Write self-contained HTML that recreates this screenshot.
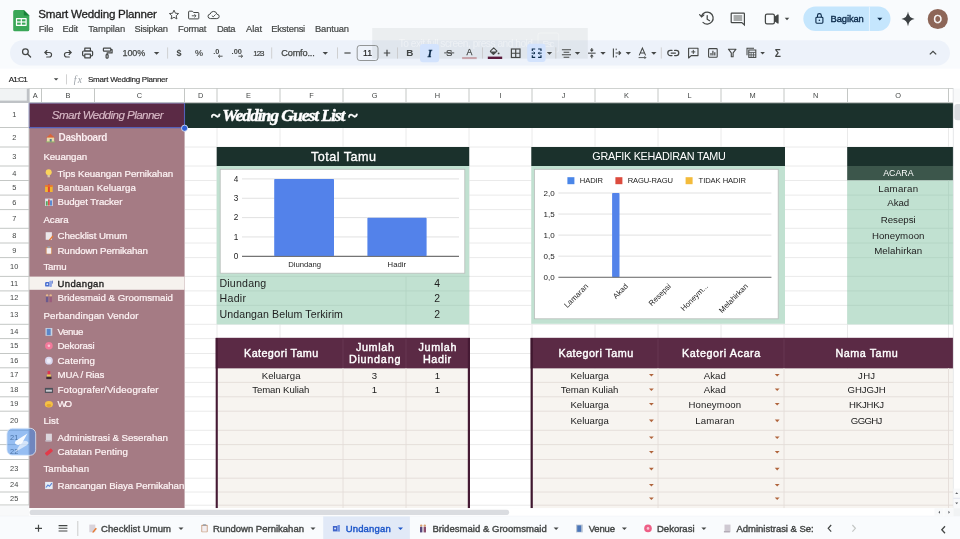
<!DOCTYPE html>
<html lang="id">
<head>
<meta charset="utf-8">
<title>Smart Wedding Planner</title>
<style>
html,body{margin:0;padding:0}
body{width:960px;height:539px;overflow:hidden;background:#f9fbfd;position:relative;font-family:"Liberation Sans",sans-serif}
.sec{position:absolute;left:0;width:960px;overflow:hidden;will-change:transform}
svg{display:block;font-family:"Liberation Sans",sans-serif}
#header{top:0;height:68px}
#formula{top:68px;height:20px}
#grid{top:88px;height:429px}
#tabs{top:516px;height:23px}
</style>
</head>
<body>
<div class="sec" id="header"><svg width="960" height="68" viewBox="0 0 960 68">
<g transform="translate(13.2,10.1)"><path d="M1.6 0 H10.6 L16.1 5.5 V19.6 Q16.1 21.2 14.5 21.2 H1.6 Q0 21.2 0 19.6 V1.6 Q0 0 1.6 0 Z" fill="#3aa757"/><path d="M10.6 0 L16.1 5.5 H11.6 Q10.6 5.5 10.6 4.5 Z" fill="#188038"/><rect x="2.7" y="8" width="10.8" height="7.8" rx="0.6" fill="#fff"/><rect x="3.9" y="9.2" width="3.6" height="2.1" fill="#3aa757"/><rect x="8.7" y="9.2" width="3.6" height="2.1" fill="#3aa757"/><rect x="3.9" y="12.5" width="3.6" height="2.1" fill="#3aa757"/><rect x="8.7" y="12.5" width="3.6" height="2.1" fill="#3aa757"/></g>
<text x="38.20" y="18.06" font-size="11.6" fill="#1f1f1f" textLength="118.60" lengthAdjust="spacing" stroke="#1f1f1f" stroke-width="0.3">Smart Wedding Planner</text>
<path d="M174 10.2 l1.4 3 3.2 .35 -2.4 2.2 .7 3.2 -2.9 -1.65 -2.9 1.65 .7 -3.2 -2.4 -2.2 3.2 -.35 z" fill="none" stroke="#444746" stroke-width="0.95" stroke-linejoin="round"/>
<g fill="none" stroke="#444746" stroke-width="1"><path d="M189.2 11.2 h3.2 l1.2 1.3 h4.6 q.6 0 .6 .6 v5.2 q0 .6 -.6 .6 h-9 q-.6 0 -.6 -.6 v-6.5 q0 -.6 .6 -.6z"/><path d="M191.8 15.8 h4.2 m-1.6 -1.6 l1.6 1.6 -1.6 1.6" stroke-width="0.9"/></g>
<g fill="none" stroke="#444746" stroke-width="1"><path d="M210.6 18.6 q-2.6 0 -2.6 -2.3 q0 -2 2.2 -2.3 q.8 -2.6 3.4 -2.6 q2.8 0 3.3 2.8 q2.3 .2 2.3 2.2 q0 2.2 -2.4 2.2 z"/><path d="M211.8 15.6 l1.4 1.3 2.4 -2.5" stroke-width="0.9"/></g>
<text x="38.80" y="31.89" font-size="9.4" fill="#444746" textLength="14.60" lengthAdjust="spacing" stroke="#444746" stroke-width="0.2">File</text>
<text x="62.50" y="31.89" font-size="9.4" fill="#444746" textLength="15.70" lengthAdjust="spacing" stroke="#444746" stroke-width="0.2">Edit</text>
<text x="88.20" y="31.89" font-size="9.4" fill="#444746" textLength="37.00" lengthAdjust="spacing" stroke="#444746" stroke-width="0.2">Tampilan</text>
<text x="134.50" y="31.89" font-size="9.4" fill="#444746" textLength="33.50" lengthAdjust="spacing" stroke="#444746" stroke-width="0.2">Sisipkan</text>
<text x="178.00" y="31.89" font-size="9.4" fill="#444746" textLength="28.40" lengthAdjust="spacing" stroke="#444746" stroke-width="0.2">Format</text>
<text x="216.90" y="31.89" font-size="9.4" fill="#444746" textLength="18.60" lengthAdjust="spacing" stroke="#444746" stroke-width="0.2">Data</text>
<text x="246.00" y="31.89" font-size="9.4" fill="#444746" textLength="16.00" lengthAdjust="spacing" stroke="#444746" stroke-width="0.2">Alat</text>
<text x="271.30" y="31.89" font-size="9.4" fill="#444746" textLength="33.90" lengthAdjust="spacing" stroke="#444746" stroke-width="0.2">Ekstensi</text>
<text x="315.00" y="31.89" font-size="9.4" fill="#444746" textLength="34.00" lengthAdjust="spacing" stroke="#444746" stroke-width="0.2">Bantuan</text>
<g fill="none" stroke="#444746" stroke-width="1.25" stroke-linecap="round"><path d="M701.6 15.8 a6 6 0 1 1 1.4 6.6"/><path d="M699.6 14.6 l2 2.2 2.2 -1.8"/><path d="M707.2 15.6 v3.6 l2.4 1.5"/></g>
<g><path d="M731.8 13.2 h12 q.6 0 .6 .6 v11.2 l-2.6 -2.4 h-10 q-.6 0 -.6 -.6 v-8.2 q0 -.6 .6 -.6z" fill="none" stroke="#444746" stroke-width="1.2"/><path d="M733.6 16 h8.6 M733.6 18 h8.6 M733.6 20 h8.6" stroke="#444746" stroke-width="0.9"/></g>
<g fill="none" stroke="#444746" stroke-width="1.25" stroke-linejoin="round"><rect x="765.4" y="14.2" width="9" height="9.6" rx="1.6"/><path d="M774.4 17.6 l3.6 -2.6 v8 l-3.6 -2.6" fill="#444746"/></g>
<path d="M784.70 17.85 h4.60 L787.00 20.25 Z" fill="#444746"/>
<rect x="803.3" y="6.5" width="87.2" height="24.5" rx="12.25" fill="#c5e6fd"/>
<line x1="869.4" y1="6.5" x2="869.4" y2="31" stroke="#e9f5ff" stroke-width="0.9"/>
<g><rect x="815.9" y="17.2" width="7" height="6" rx="0.9" fill="none" stroke="#0b2a4a" stroke-width="1.1"/><path d="M817.5 17.2 v-1.7 a1.9 1.9 0 0 1 3.8 0 v1.7" fill="none" stroke="#0b2a4a" stroke-width="1.1"/><circle cx="819.4" cy="20.2" r="0.8" fill="#0b2a4a"/></g>
<text x="830.60" y="22.19" font-size="9.4" fill="#0b2a4a" textLength="33.20" lengthAdjust="spacing" stroke="#0b2a4a" stroke-width="0.35">Bagikan</text>
<path d="M877.20 17.85 h5.20 L879.80 20.57 Z" fill="#0b2a4a"/>
<path d="M908 11.6 Q908.7 18.2 914.6 18.9 Q908.7 19.6 908 26.2 Q907.3 19.6 901.4 18.9 Q907.3 18.2 908 11.6 Z" fill="#3c4043"/>
<circle cx="937.8" cy="19" r="10.1" fill="#8d6658"/>
<text x="937.80" y="22.88" font-size="10.8" fill="#ffffff" text-anchor="middle" stroke="#ffffff" stroke-width="0.3">O</text>
<rect x="10" y="40.2" width="940" height="25.2" rx="12.6" fill="#edf2fa"/>
<rect x="372.2" y="28" width="215.6" height="30.6" fill="#5f6368" opacity="0.085"/>
<text x="398.70" y="47.27" font-size="10.2" fill="#ffffff" textLength="134.30" lengthAdjust="spacing" opacity="0.42">To exit full screen, press and hold</text>
<rect x="538" y="33" width="20.7" height="19" rx="2" fill="none" stroke="#ffffff" stroke-width="0.8" opacity="0.35"/>
<text x="542.50" y="47.19" font-size="9.4" fill="#ffffff" textLength="12.00" lengthAdjust="spacing" opacity="0.42">Esc</text>
<g fill="none" stroke="#444746" stroke-width="1.25" stroke-linecap="round"><circle cx="25.4" cy="51.7" r="2.85"/><path d="M27.6 54 l3 3"/></g>
<g fill="none" stroke="#444746" stroke-width="1.15" stroke-linecap="round" stroke-linejoin="round"><path d="M45 52.5 h4.3 a2.25 2.25 0 0 1 0 4.5 h-2.6"/><path d="M46.9 50.5 l-2 2 2 2"/></g>
<g fill="none" stroke="#444746" stroke-width="1.15" stroke-linecap="round" stroke-linejoin="round"><path d="M71 52.5 h-4.3 a2.25 2.25 0 0 0 0 4.5 h2.6"/><path d="M69.1 50.5 l2 2 -2 2"/></g>
<g fill="none" stroke="#444746" stroke-width="1.2" stroke-linejoin="round"><rect x="84.8" y="48.2" width="5.6" height="2.8"/><rect x="82.6" y="51" width="10" height="4.8" rx="1"/><rect x="84.8" y="54.2" width="5.6" height="3.6" fill="#edf2fa"/></g>
<g fill="none" stroke="#444746" stroke-width="1.2" stroke-linejoin="round"><rect x="103.4" y="48.2" width="7.4" height="3" rx="0.6"/><path d="M110.8 49.7 h1.3 v3.2 h-5 v1.8"/><rect x="106.1" y="54.7" width="2" height="3.4" rx="0.5"/></g>
<text x="122.50" y="56.15" font-size="9" fill="#444746" textLength="22.70" lengthAdjust="spacing" stroke="#444746" stroke-width="0.25">100%</text>
<path d="M153.90 51.95 h5.40 L156.60 54.67 Z" fill="#444746"/>
<line x1="167.6" y1="47.4" x2="167.6" y2="58.6" stroke="#c7c7c7" stroke-width="0.8"/>
<text x="179.00" y="56.15" font-size="9" fill="#444746" text-anchor="middle" font-weight="bold">$</text>
<text x="198.90" y="56.15" font-size="9" fill="#444746" text-anchor="middle" stroke="#444746" stroke-width="0.2">%</text>
<text x="213.20" y="54.29" font-size="7.4" fill="#444746" font-weight="bold">.0</text>
<path d="M222.6 56.2 h-4.2 m1.6 -1.5 l-1.6 1.5 1.6 1.5" fill="none" stroke="#444746" stroke-width="0.9"/>
<text x="231.60" y="54.29" font-size="7.4" fill="#444746" font-weight="bold">.00</text>
<path d="M238.4 56.2 h4.2 m-1.6 -1.5 l1.6 1.5 -1.6 1.5" fill="none" stroke="#444746" stroke-width="0.9"/>
<text x="253.30" y="55.80" font-size="8" fill="#444746" textLength="11.20" lengthAdjust="spacing" stroke="#444746" stroke-width="0.2">123</text>
<line x1="271.7" y1="47.4" x2="271.7" y2="58.6" stroke="#c7c7c7" stroke-width="0.8"/>
<text x="281.30" y="56.22" font-size="9.2" fill="#444746" textLength="33.40" lengthAdjust="spacing" stroke="#444746" stroke-width="0.25">Comfo...</text>
<path d="M322.60 51.95 h5.40 L325.30 54.67 Z" fill="#444746"/>
<line x1="337.5" y1="47.4" x2="337.5" y2="58.6" stroke="#c7c7c7" stroke-width="0.8"/>
<path d="M344.4 53 h6.2" stroke="#444746" stroke-width="1.2"/>
<rect x="357.2" y="45.5" width="20.8" height="15" rx="2.6" fill="none" stroke="#747775" stroke-width="0.75"/>
<text x="367.60" y="56.08" font-size="8.8" fill="#1f1f1f" text-anchor="middle" stroke="#1f1f1f" stroke-width="0.2">11</text>
<path d="M383.8 53 h6.4 M387 49.8 v6.4" stroke="#444746" stroke-width="1.2"/>
<line x1="397.5" y1="47.4" x2="397.5" y2="58.6" stroke="#c7c7c7" stroke-width="0.8"/>
<text x="409.90" y="55.93" font-size="9.8" fill="#444746" text-anchor="middle" font-weight="bold">B</text>
<rect x="420" y="44" width="19.2" height="18.2" rx="3" fill="#d3e3fd"/>
<text x="429.80" y="56.71" font-size="10.6" fill="#0b2a4a" text-anchor="middle" font-weight="bold" font-style="italic" font-family='"Liberation Serif", serif' stroke="#0b2a4a" stroke-width="0.3">I</text>
<text x="449.20" y="56.26" font-size="9.6" fill="#444746" text-anchor="middle" stroke="#444746" stroke-width="0.2">S</text>
<path d="M444.2 52.9 h10" stroke="#444746" stroke-width="0.95"/>
<text x="469.40" y="55.18" font-size="8.8" fill="#444746" text-anchor="middle" stroke="#444746" stroke-width="0.25">A</text>
<rect x="462.1" y="57" width="14.6" height="2.1" fill="#c8a5ac"/>
<line x1="482.5" y1="47.4" x2="482.5" y2="58.6" stroke="#c7c7c7" stroke-width="0.8"/>
<g><path d="M490.6 50.9 l3.1 -3.1 3.3 3.3 -3.1 3.1 q-.45 .45 -.9 0 l-2.4 -2.4 q-.45 -.45 0 -.9z" fill="none" stroke="#444746" stroke-width="1.05" stroke-linejoin="round"/><path d="M490.8 51.5 h5.7 l-2.7 2.7 q-.4 .4 -.8 0z" fill="#444746"/><circle cx="498.6" cy="53.4" r="0.95" fill="#444746"/></g>
<rect x="487.8" y="56.6" width="14.4" height="2.4" fill="#5b1a3c"/>
<g fill="none" stroke="#444746" stroke-width="1.2"><rect x="511.4" y="49" width="8.6" height="8.5"/><path d="M515.7 49 v8.5 M511.4 53.25 h8.6"/></g>
<rect x="527.2" y="43.8" width="18.4" height="18.1" rx="3" fill="#d3e3fd"/>
<g fill="none" stroke="#0b2a4a" stroke-width="1.15"><path d="M532.3 51 v-2 h2.9 M538.1 49 h2.9 v2 M532.3 55.3 v2 h2.9 M538.1 57.3 h2.9 v-2"/><path d="M531.6 53.15 h3.4 m-1.3 -1.3 l1.3 1.3 -1.3 1.3 M541.7 53.15 h-3.4 m1.3 -1.3 l-1.3 1.3 1.3 1.3" stroke-width="1"/></g>
<path d="M546.80 51.95 h5.40 L549.50 54.67 Z" fill="#444746"/>
<line x1="555.8" y1="47.4" x2="555.8" y2="58.6" stroke="#c7c7c7" stroke-width="0.8"/>
<path d="M561.9 49.8 h9.1 M563.6 52.3 h5.7 M561.9 54.8 h9.1 M563.6 57.3 h5.7" stroke="#444746" stroke-width="1.05"/>
<path d="M574.80 51.95 h5.40 L577.50 54.67 Z" fill="#444746"/>
<g stroke="#444746" stroke-width="1.05" fill="none"><path d="M588 53.15 h7.6"/><path d="M591.8 48 v3.2 m-1.4 -1.5 l1.4 1.5 1.4 -1.5 M591.8 58.2 v-3.2 m-1.4 1.5 l1.4 -1.5 1.4 1.5"/></g>
<path d="M600.30 51.95 h5.40 L603.00 54.67 Z" fill="#444746"/>
<g stroke="#444746" stroke-width="1.1" fill="none"><path d="M613.2 48.4 v9.2 M620.6 48.4 v9.2" stroke-width="1.1" opacity=".0"/><path d="M613.4 48.6 v8.8"/><path d="M615.6 53 h5 m-1.8 -1.8 l1.8 1.8 -1.8 1.8"/><path d="M616.2 48.6 v1.6 M616.2 55.8 v1.6" stroke-width="1"/></g>
<path d="M625.60 51.95 h5.40 L628.30 54.67 Z" fill="#444746"/>
<g stroke="#444746" stroke-width="1.05" fill="none"><path d="M639.2 55.4 l3.2 -7.4 3.2 7.4 M640.3 53 h4.2"/><path d="M638.6 57.6 h7.2 m-1.3 -1.3 l1.3 1.3 -1.3 1.3" stroke-width="0.9"/></g>
<path d="M651.10 51.95 h5.40 L653.80 54.67 Z" fill="#444746"/>
<line x1="661.3" y1="47.4" x2="661.3" y2="58.6" stroke="#c7c7c7" stroke-width="0.8"/>
<g fill="none" stroke="#444746" stroke-width="1.25" stroke-linecap="round"><path d="M672 55.6 h-1.6 a2.6 2.6 0 0 1 0 -5.2 h1.6 M674.6 50.4 h1.6 a2.6 2.6 0 0 1 0 5.2 h-1.6 M671.2 53 h4.2"/></g>
<g fill="none" stroke="#444746" stroke-width="1.1" stroke-linejoin="round"><path d="M688.6 48.2 h9.4 v7.4 h-6.8 l-2.6 2.4z"/><path d="M693.3 49.9 v4 M691.3 51.9 h4" stroke-width="1"/></g>
<g fill="none" stroke="#444746" stroke-width="1.1"><rect x="708.6" y="48.6" width="8.6" height="8.6" rx="0.8"/><path d="M711 55.4 v-2.4 M712.9 55.4 v-4.6 M714.8 55.4 v-3.2" stroke-width="1.2"/></g>
<path d="M728.4 49.2 h7.6 l-2.9 3.7 v3.9 h-1.8 v-3.9z" fill="none" stroke="#444746" stroke-width="1.1" stroke-linejoin="round"/>
<g fill="none" stroke="#444746" stroke-width="1.05"><path d="M747 55.2 v-7 h7"/><rect x="748.8" y="50" width="7" height="7.4"/><path d="M748.8 52.4 h7 M751.1 52.4 v5 M753.4 52.4 v5 M748.8 54.9 h7" stroke-width="0.8"/></g>
<path d="M760.30 52.05 h4.60 L762.60 54.45 Z" fill="#444746"/>
<text x="777.70" y="56.57" font-size="10.2" fill="#444746" text-anchor="middle" font-weight="bold">Σ</text>
<path d="M929.8 54.4 l3.2 -3.1 3.2 3.1" fill="none" stroke="#444746" stroke-width="1.25"/>
</svg></div>
<div class="sec" id="formula"><svg width="960" height="20" viewBox="0 68 960 20">
<rect x="0" y="68.6" width="960" height="19.6" fill="#ffffff"/>
<text x="8.80" y="81.83" font-size="8.1" fill="#1f1f1f" textLength="18.90" lengthAdjust="spacing" stroke="#1f1f1f" stroke-width="0.15">A1:C1</text>
<path d="M53.80 78.15 h4.60 L56.10 80.55 Z" fill="#444746"/>
<line x1="66.5" y1="74.3" x2="66.5" y2="84.4" stroke="#c7c7c7" stroke-width="0.8"/>
<text x="73.80" y="82.56" font-size="9.6" fill="#9aa0a6" font-style="italic" textLength="8.20" lengthAdjust="spacing" font-family='"Liberation Serif", serif'>fx</text>
<text x="88.00" y="81.70" font-size="8" fill="#1f1f1f" textLength="80.00" lengthAdjust="spacing" stroke="#1f1f1f" stroke-width="0.15">Smart Wedding Planner</text>
</svg></div>
<div class="sec" id="grid"><svg width="960" height="429" viewBox="0 88 960 429">
<rect x="0.00" y="88.00" width="953.40" height="420.20" fill="#ffffff" />
<line x1="41.50" y1="102.50" x2="41.50" y2="508.20" stroke="#eaeaea" stroke-width="1" />
<line x1="94.50" y1="102.50" x2="94.50" y2="508.20" stroke="#eaeaea" stroke-width="1" />
<line x1="184.50" y1="102.50" x2="184.50" y2="508.20" stroke="#eaeaea" stroke-width="1" />
<line x1="217.00" y1="102.50" x2="217.00" y2="508.20" stroke="#eaeaea" stroke-width="1" />
<line x1="280.00" y1="102.50" x2="280.00" y2="508.20" stroke="#eaeaea" stroke-width="1" />
<line x1="343.00" y1="102.50" x2="343.00" y2="508.20" stroke="#eaeaea" stroke-width="1" />
<line x1="406.00" y1="102.50" x2="406.00" y2="508.20" stroke="#eaeaea" stroke-width="1" />
<line x1="469.00" y1="102.50" x2="469.00" y2="508.20" stroke="#eaeaea" stroke-width="1" />
<line x1="532.00" y1="102.50" x2="532.00" y2="508.20" stroke="#eaeaea" stroke-width="1" />
<line x1="595.00" y1="102.50" x2="595.00" y2="508.20" stroke="#eaeaea" stroke-width="1" />
<line x1="658.00" y1="102.50" x2="658.00" y2="508.20" stroke="#eaeaea" stroke-width="1" />
<line x1="721.00" y1="102.50" x2="721.00" y2="508.20" stroke="#eaeaea" stroke-width="1" />
<line x1="784.00" y1="102.50" x2="784.00" y2="508.20" stroke="#eaeaea" stroke-width="1" />
<line x1="847.50" y1="102.50" x2="847.50" y2="508.20" stroke="#eaeaea" stroke-width="1" />
<line x1="948.50" y1="102.50" x2="948.50" y2="508.20" stroke="#eaeaea" stroke-width="1" />
<line x1="953.40" y1="102.50" x2="953.40" y2="508.20" stroke="#eaeaea" stroke-width="1" />
<line x1="29.00" y1="127.50" x2="953.40" y2="127.50" stroke="#eaeaea" stroke-width="1" />
<line x1="29.00" y1="147.00" x2="953.40" y2="147.00" stroke="#eaeaea" stroke-width="1" />
<line x1="29.00" y1="166.00" x2="953.40" y2="166.00" stroke="#eaeaea" stroke-width="1" />
<line x1="29.00" y1="180.50" x2="953.40" y2="180.50" stroke="#eaeaea" stroke-width="1" />
<line x1="29.00" y1="195.10" x2="953.40" y2="195.10" stroke="#eaeaea" stroke-width="1" />
<line x1="29.00" y1="209.60" x2="953.40" y2="209.60" stroke="#eaeaea" stroke-width="1" />
<line x1="29.00" y1="228.30" x2="953.40" y2="228.30" stroke="#eaeaea" stroke-width="1" />
<line x1="29.00" y1="243.00" x2="953.40" y2="243.00" stroke="#eaeaea" stroke-width="1" />
<line x1="29.00" y1="257.60" x2="953.40" y2="257.60" stroke="#eaeaea" stroke-width="1" />
<line x1="29.00" y1="276.40" x2="953.40" y2="276.40" stroke="#eaeaea" stroke-width="1" />
<line x1="29.00" y1="290.90" x2="953.40" y2="290.90" stroke="#eaeaea" stroke-width="1" />
<line x1="29.00" y1="305.40" x2="953.40" y2="305.40" stroke="#eaeaea" stroke-width="1" />
<line x1="29.00" y1="324.30" x2="953.40" y2="324.30" stroke="#eaeaea" stroke-width="1" />
<line x1="29.00" y1="338.60" x2="953.40" y2="338.60" stroke="#eaeaea" stroke-width="1" />
<line x1="29.00" y1="353.50" x2="953.40" y2="353.50" stroke="#eaeaea" stroke-width="1" />
<line x1="29.00" y1="367.80" x2="953.40" y2="367.80" stroke="#eaeaea" stroke-width="1" />
<line x1="29.00" y1="382.40" x2="953.40" y2="382.40" stroke="#eaeaea" stroke-width="1" />
<line x1="29.00" y1="396.80" x2="953.40" y2="396.80" stroke="#eaeaea" stroke-width="1" />
<line x1="29.00" y1="411.20" x2="953.40" y2="411.20" stroke="#eaeaea" stroke-width="1" />
<line x1="29.00" y1="430.30" x2="953.40" y2="430.30" stroke="#eaeaea" stroke-width="1" />
<line x1="29.00" y1="444.60" x2="953.40" y2="444.60" stroke="#eaeaea" stroke-width="1" />
<line x1="29.00" y1="459.50" x2="953.40" y2="459.50" stroke="#eaeaea" stroke-width="1" />
<line x1="29.00" y1="478.20" x2="953.40" y2="478.20" stroke="#eaeaea" stroke-width="1" />
<line x1="29.00" y1="492.00" x2="953.40" y2="492.00" stroke="#eaeaea" stroke-width="1" />
<line x1="29.00" y1="505.20" x2="953.40" y2="505.20" stroke="#eaeaea" stroke-width="1" />
<rect x="29.00" y="103.20" width="155.50" height="24.60" fill="#5b2a45" />
<rect x="29.00" y="127.80" width="155.50" height="380.40" fill="#a57b84" />
<rect x="29.00" y="276.60" width="155.50" height="13.20" fill="#f6f2ee" />
<rect x="184.50" y="103.20" width="768.90" height="24.80" fill="#1b312c" />
<rect x="216.70" y="147.00" width="252.50" height="19.00" fill="#1b312c" />
<rect x="216.70" y="166.00" width="252.50" height="158.40" fill="#c1e1d1" />
<line x1="216.70" y1="276.40" x2="469.50" y2="276.40" stroke="#b3d3c3" stroke-width="0.8" />
<line x1="216.70" y1="290.90" x2="469.50" y2="290.90" stroke="#b3d3c3" stroke-width="0.8" />
<line x1="216.70" y1="305.40" x2="469.50" y2="305.40" stroke="#b3d3c3" stroke-width="0.8" />
<line x1="406.00" y1="276.50" x2="406.00" y2="324.40" stroke="#b3d3c3" stroke-width="0.8" />
<rect x="531.30" y="147.00" width="253.70" height="19.00" fill="#1b312c" />
<rect x="531.30" y="166.00" width="253.70" height="157.80" fill="#c1e1d1" />
<rect x="847.20" y="147.00" width="106.20" height="19.00" fill="#1b312c" />
<rect x="847.20" y="166.00" width="106.20" height="14.50" fill="#3c564b" />
<rect x="847.20" y="180.50" width="106.20" height="143.90" fill="#c1e1d1" />
<line x1="847.20" y1="195.10" x2="953.40" y2="195.10" stroke="#b3d3c3" stroke-width="0.8" />
<line x1="847.20" y1="209.60" x2="953.40" y2="209.60" stroke="#b3d3c3" stroke-width="0.8" />
<line x1="847.20" y1="228.30" x2="953.40" y2="228.30" stroke="#b3d3c3" stroke-width="0.8" />
<line x1="847.20" y1="243.00" x2="953.40" y2="243.00" stroke="#b3d3c3" stroke-width="0.8" />
<line x1="847.20" y1="257.60" x2="953.40" y2="257.60" stroke="#b3d3c3" stroke-width="0.8" />
<line x1="847.20" y1="276.40" x2="953.40" y2="276.40" stroke="#b3d3c3" stroke-width="0.8" />
<line x1="847.20" y1="290.90" x2="953.40" y2="290.90" stroke="#b3d3c3" stroke-width="0.8" />
<line x1="847.20" y1="305.40" x2="953.40" y2="305.40" stroke="#b3d3c3" stroke-width="0.8" />
<line x1="948.50" y1="180.50" x2="948.50" y2="324.40" stroke="#b3d3c3" stroke-width="0.8" />
<rect x="215.70" y="337.80" width="254.30" height="30.80" fill="#5b2a45" />
<rect x="215.70" y="368.60" width="254.30" height="139.60" fill="#f7f4f0" />
<line x1="218.00" y1="382.40" x2="468.00" y2="382.40" stroke="#e3ddd8" stroke-width="0.9" />
<line x1="218.00" y1="396.80" x2="468.00" y2="396.80" stroke="#e3ddd8" stroke-width="0.9" />
<line x1="218.00" y1="411.20" x2="468.00" y2="411.20" stroke="#e3ddd8" stroke-width="0.9" />
<line x1="218.00" y1="430.30" x2="468.00" y2="430.30" stroke="#e3ddd8" stroke-width="0.9" />
<line x1="218.00" y1="444.60" x2="468.00" y2="444.60" stroke="#e3ddd8" stroke-width="0.9" />
<line x1="218.00" y1="459.50" x2="468.00" y2="459.50" stroke="#e3ddd8" stroke-width="0.9" />
<line x1="218.00" y1="478.20" x2="468.00" y2="478.20" stroke="#e3ddd8" stroke-width="0.9" />
<line x1="218.00" y1="492.00" x2="468.00" y2="492.00" stroke="#e3ddd8" stroke-width="0.9" />
<line x1="218.00" y1="505.20" x2="468.00" y2="505.20" stroke="#e3ddd8" stroke-width="0.9" />
<line x1="343.00" y1="368.00" x2="343.00" y2="508.20" stroke="#e3ddd8" stroke-width="0.9" />
<line x1="406.00" y1="368.00" x2="406.00" y2="508.20" stroke="#e3ddd8" stroke-width="0.9" />
<line x1="343.00" y1="339.00" x2="343.00" y2="368.00" stroke="#6a3a55" stroke-width="0.8" />
<line x1="406.00" y1="339.00" x2="406.00" y2="368.00" stroke="#6a3a55" stroke-width="0.8" />
<rect x="215.70" y="338.00" width="2.10" height="170.20" fill="#451a34" />
<rect x="467.80" y="338.00" width="2.20" height="170.20" fill="#451a34" />
<rect x="530.60" y="337.80" width="422.80" height="30.80" fill="#5b2a45" />
<rect x="530.60" y="368.60" width="422.80" height="139.60" fill="#f7f4f0" />
<line x1="533.00" y1="382.40" x2="953.40" y2="382.40" stroke="#e3ddd8" stroke-width="0.9" />
<line x1="533.00" y1="396.80" x2="953.40" y2="396.80" stroke="#e3ddd8" stroke-width="0.9" />
<line x1="533.00" y1="411.20" x2="953.40" y2="411.20" stroke="#e3ddd8" stroke-width="0.9" />
<line x1="533.00" y1="430.30" x2="953.40" y2="430.30" stroke="#e3ddd8" stroke-width="0.9" />
<line x1="533.00" y1="444.60" x2="953.40" y2="444.60" stroke="#e3ddd8" stroke-width="0.9" />
<line x1="533.00" y1="459.50" x2="953.40" y2="459.50" stroke="#e3ddd8" stroke-width="0.9" />
<line x1="533.00" y1="478.20" x2="953.40" y2="478.20" stroke="#e3ddd8" stroke-width="0.9" />
<line x1="533.00" y1="492.00" x2="953.40" y2="492.00" stroke="#e3ddd8" stroke-width="0.9" />
<line x1="533.00" y1="505.20" x2="953.40" y2="505.20" stroke="#e3ddd8" stroke-width="0.9" />
<line x1="658.00" y1="368.00" x2="658.00" y2="508.20" stroke="#e3ddd8" stroke-width="0.9" />
<line x1="784.00" y1="368.00" x2="784.00" y2="508.20" stroke="#e3ddd8" stroke-width="0.9" />
<line x1="948.50" y1="368.00" x2="948.50" y2="508.20" stroke="#e3ddd8" stroke-width="0.9" />
<line x1="658.00" y1="339.00" x2="658.00" y2="368.00" stroke="#6a3a55" stroke-width="0.8" />
<line x1="784.00" y1="339.00" x2="784.00" y2="368.00" stroke="#6a3a55" stroke-width="0.8" />
<rect x="530.60" y="338.00" width="2.20" height="170.20" fill="#3f172f" />
<rect x="0.00" y="88.00" width="953.40" height="14.50" fill="#ffffff" />
<rect x="0.00" y="102.50" width="29.00" height="405.70" fill="#ffffff" />
<line x1="0.00" y1="88.30" x2="953.40" y2="88.30" stroke="#c4c7c5" stroke-width="1" />
<line x1="0.00" y1="102.50" x2="953.40" y2="102.50" stroke="#c4c7c5" stroke-width="1" />
<line x1="29.00" y1="88.00" x2="29.00" y2="508.20" stroke="#c4c7c5" stroke-width="1" />
<line x1="41.50" y1="88.00" x2="41.50" y2="102.50" stroke="#c4c7c5" stroke-width="1" />
<text x="35.25" y="98.19" font-size="7.4" fill="#444746" text-anchor="middle">A</text>
<line x1="94.50" y1="88.00" x2="94.50" y2="102.50" stroke="#c4c7c5" stroke-width="1" />
<text x="68.00" y="98.19" font-size="7.4" fill="#444746" text-anchor="middle">B</text>
<line x1="184.50" y1="88.00" x2="184.50" y2="102.50" stroke="#c4c7c5" stroke-width="1" />
<text x="139.50" y="98.19" font-size="7.4" fill="#444746" text-anchor="middle">C</text>
<line x1="217.00" y1="88.00" x2="217.00" y2="102.50" stroke="#c4c7c5" stroke-width="1" />
<text x="200.75" y="98.19" font-size="7.4" fill="#444746" text-anchor="middle">D</text>
<line x1="280.00" y1="88.00" x2="280.00" y2="102.50" stroke="#c4c7c5" stroke-width="1" />
<text x="248.50" y="98.19" font-size="7.4" fill="#444746" text-anchor="middle">E</text>
<line x1="343.00" y1="88.00" x2="343.00" y2="102.50" stroke="#c4c7c5" stroke-width="1" />
<text x="311.50" y="98.19" font-size="7.4" fill="#444746" text-anchor="middle">F</text>
<line x1="406.00" y1="88.00" x2="406.00" y2="102.50" stroke="#c4c7c5" stroke-width="1" />
<text x="374.50" y="98.19" font-size="7.4" fill="#444746" text-anchor="middle">G</text>
<line x1="469.00" y1="88.00" x2="469.00" y2="102.50" stroke="#c4c7c5" stroke-width="1" />
<text x="437.50" y="98.19" font-size="7.4" fill="#444746" text-anchor="middle">H</text>
<line x1="532.00" y1="88.00" x2="532.00" y2="102.50" stroke="#c4c7c5" stroke-width="1" />
<text x="500.50" y="98.19" font-size="7.4" fill="#444746" text-anchor="middle">I</text>
<line x1="595.00" y1="88.00" x2="595.00" y2="102.50" stroke="#c4c7c5" stroke-width="1" />
<text x="563.50" y="98.19" font-size="7.4" fill="#444746" text-anchor="middle">J</text>
<line x1="658.00" y1="88.00" x2="658.00" y2="102.50" stroke="#c4c7c5" stroke-width="1" />
<text x="626.50" y="98.19" font-size="7.4" fill="#444746" text-anchor="middle">K</text>
<line x1="721.00" y1="88.00" x2="721.00" y2="102.50" stroke="#c4c7c5" stroke-width="1" />
<text x="689.50" y="98.19" font-size="7.4" fill="#444746" text-anchor="middle">L</text>
<line x1="784.00" y1="88.00" x2="784.00" y2="102.50" stroke="#c4c7c5" stroke-width="1" />
<text x="752.50" y="98.19" font-size="7.4" fill="#444746" text-anchor="middle">M</text>
<line x1="847.50" y1="88.00" x2="847.50" y2="102.50" stroke="#c4c7c5" stroke-width="1" />
<text x="815.75" y="98.19" font-size="7.4" fill="#444746" text-anchor="middle">N</text>
<line x1="948.50" y1="88.00" x2="948.50" y2="102.50" stroke="#c4c7c5" stroke-width="1" />
<text x="898.00" y="98.19" font-size="7.4" fill="#444746" text-anchor="middle">O</text>
<line x1="953.40" y1="88.00" x2="953.40" y2="102.50" stroke="#c4c7c5" stroke-width="1" />
<line x1="0.00" y1="127.50" x2="29.00" y2="127.50" stroke="#c4c7c5" stroke-width="1" />
<text x="14.20" y="117.29" font-size="7.4" fill="#444746" text-anchor="middle">1</text>
<line x1="0.00" y1="147.00" x2="29.00" y2="147.00" stroke="#c4c7c5" stroke-width="1" />
<text x="14.20" y="139.54" font-size="7.4" fill="#444746" text-anchor="middle">2</text>
<line x1="0.00" y1="166.00" x2="29.00" y2="166.00" stroke="#c4c7c5" stroke-width="1" />
<text x="14.20" y="158.79" font-size="7.4" fill="#444746" text-anchor="middle">3</text>
<line x1="0.00" y1="180.50" x2="29.00" y2="180.50" stroke="#c4c7c5" stroke-width="1" />
<text x="14.20" y="175.54" font-size="7.4" fill="#444746" text-anchor="middle">4</text>
<line x1="0.00" y1="195.10" x2="29.00" y2="195.10" stroke="#c4c7c5" stroke-width="1" />
<text x="14.20" y="190.09" font-size="7.4" fill="#444746" text-anchor="middle">5</text>
<line x1="0.00" y1="209.60" x2="29.00" y2="209.60" stroke="#c4c7c5" stroke-width="1" />
<text x="14.20" y="204.64" font-size="7.4" fill="#444746" text-anchor="middle">6</text>
<line x1="0.00" y1="228.30" x2="29.00" y2="228.30" stroke="#c4c7c5" stroke-width="1" />
<text x="14.20" y="221.24" font-size="7.4" fill="#444746" text-anchor="middle">7</text>
<line x1="0.00" y1="243.00" x2="29.00" y2="243.00" stroke="#c4c7c5" stroke-width="1" />
<text x="14.20" y="237.94" font-size="7.4" fill="#444746" text-anchor="middle">8</text>
<line x1="0.00" y1="257.60" x2="29.00" y2="257.60" stroke="#c4c7c5" stroke-width="1" />
<text x="14.20" y="252.59" font-size="7.4" fill="#444746" text-anchor="middle">9</text>
<line x1="0.00" y1="276.40" x2="29.00" y2="276.40" stroke="#c4c7c5" stroke-width="1" />
<text x="14.20" y="269.29" font-size="7.4" fill="#444746" text-anchor="middle">10</text>
<line x1="0.00" y1="290.90" x2="29.00" y2="290.90" stroke="#c4c7c5" stroke-width="1" />
<text x="14.20" y="285.94" font-size="7.4" fill="#444746" text-anchor="middle">11</text>
<line x1="0.00" y1="305.40" x2="29.00" y2="305.40" stroke="#c4c7c5" stroke-width="1" />
<text x="14.20" y="300.44" font-size="7.4" fill="#444746" text-anchor="middle">12</text>
<line x1="0.00" y1="324.30" x2="29.00" y2="324.30" stroke="#c4c7c5" stroke-width="1" />
<text x="14.20" y="317.14" font-size="7.4" fill="#444746" text-anchor="middle">13</text>
<line x1="0.00" y1="338.60" x2="29.00" y2="338.60" stroke="#c4c7c5" stroke-width="1" />
<text x="14.20" y="333.74" font-size="7.4" fill="#444746" text-anchor="middle">14</text>
<line x1="0.00" y1="353.50" x2="29.00" y2="353.50" stroke="#c4c7c5" stroke-width="1" />
<text x="14.20" y="348.34" font-size="7.4" fill="#444746" text-anchor="middle">15</text>
<line x1="0.00" y1="367.80" x2="29.00" y2="367.80" stroke="#c4c7c5" stroke-width="1" />
<text x="14.20" y="362.94" font-size="7.4" fill="#444746" text-anchor="middle">16</text>
<line x1="0.00" y1="382.40" x2="29.00" y2="382.40" stroke="#c4c7c5" stroke-width="1" />
<text x="14.20" y="377.39" font-size="7.4" fill="#444746" text-anchor="middle">17</text>
<line x1="0.00" y1="396.80" x2="29.00" y2="396.80" stroke="#c4c7c5" stroke-width="1" />
<text x="14.20" y="391.89" font-size="7.4" fill="#444746" text-anchor="middle">18</text>
<line x1="0.00" y1="411.20" x2="29.00" y2="411.20" stroke="#c4c7c5" stroke-width="1" />
<text x="14.20" y="406.29" font-size="7.4" fill="#444746" text-anchor="middle">19</text>
<line x1="0.00" y1="430.30" x2="29.00" y2="430.30" stroke="#c4c7c5" stroke-width="1" />
<text x="14.20" y="423.04" font-size="7.4" fill="#444746" text-anchor="middle">20</text>
<line x1="0.00" y1="444.60" x2="29.00" y2="444.60" stroke="#c4c7c5" stroke-width="1" />
<text x="14.20" y="439.74" font-size="7.4" fill="#444746" text-anchor="middle">21</text>
<line x1="0.00" y1="459.50" x2="29.00" y2="459.50" stroke="#c4c7c5" stroke-width="1" />
<text x="14.20" y="454.34" font-size="7.4" fill="#444746" text-anchor="middle">22</text>
<line x1="0.00" y1="478.20" x2="29.00" y2="478.20" stroke="#c4c7c5" stroke-width="1" />
<text x="14.20" y="471.14" font-size="7.4" fill="#444746" text-anchor="middle">23</text>
<line x1="0.00" y1="492.00" x2="29.00" y2="492.00" stroke="#c4c7c5" stroke-width="1" />
<text x="14.20" y="487.39" font-size="7.4" fill="#444746" text-anchor="middle">24</text>
<line x1="0.00" y1="505.20" x2="29.00" y2="505.20" stroke="#c4c7c5" stroke-width="1" />
<text x="14.20" y="500.89" font-size="7.4" fill="#444746" text-anchor="middle">25</text>
<line x1="0.00" y1="505.20" x2="29.00" y2="505.20" stroke="#c4c7c5" stroke-width="1" />
<rect x="0.00" y="88.60" width="28.50" height="13.40" fill="#f1f3f4" />
<rect x="26.80" y="88.60" width="2.50" height="14.20" fill="#bfc2c6" />
<rect x="0.00" y="100.60" width="29.30" height="2.30" fill="#bfc2c6" />
<text x="51.80" y="119.06" font-size="11.6" fill="#d8b9c6" font-style="italic" textLength="111.80" lengthAdjust="spacing" stroke="#d8b9c6" stroke-width="0.15">Smart Wedding Planner</text>
<text x="58.60" y="141.30" font-size="10" fill="#fbeef1" font-weight="bold" textLength="48.70" lengthAdjust="spacing">Dashboard</text>
<text x="43.40" y="160.10" font-size="9.7" fill="#fdf3f4" textLength="43.70" lengthAdjust="spacing" stroke="#fdf3f4" stroke-width="0.22">Keuangan</text>
<text x="43.40" y="222.90" font-size="9.7" fill="#fdf3f4" textLength="25.30" lengthAdjust="spacing" stroke="#fdf3f4" stroke-width="0.22">Acara</text>
<text x="43.40" y="270.30" font-size="9.7" fill="#fdf3f4" textLength="23.30" lengthAdjust="spacing" stroke="#fdf3f4" stroke-width="0.22">Tamu</text>
<text x="43.40" y="318.59" font-size="9.7" fill="#fdf3f4" textLength="95.00" lengthAdjust="spacing" stroke="#fdf3f4" stroke-width="0.22">Perbandingan Vendor</text>
<text x="43.40" y="424.19" font-size="9.7" fill="#fdf3f4" textLength="15.20" lengthAdjust="spacing" stroke="#fdf3f4" stroke-width="0.22">List</text>
<text x="43.40" y="472.19" font-size="9.7" fill="#fdf3f4" textLength="45.70" lengthAdjust="spacing" stroke="#fdf3f4" stroke-width="0.22">Tambahan</text>
<text x="57.50" y="176.50" font-size="9.7" fill="#fdf3f4" textLength="115.70" lengthAdjust="spacing" stroke="#fdf3f4" stroke-width="0.22">Tips Keuangan Pernikahan</text>
<text x="57.50" y="191.20" font-size="9.7" fill="#fdf3f4" textLength="78.40" lengthAdjust="spacing" stroke="#fdf3f4" stroke-width="0.22">Bantuan Keluarga</text>
<text x="57.50" y="205.40" font-size="9.7" fill="#fdf3f4" textLength="64.90" lengthAdjust="spacing" stroke="#fdf3f4" stroke-width="0.22">Budget Tracker</text>
<text x="57.50" y="239.20" font-size="9.7" fill="#fdf3f4" textLength="69.80" lengthAdjust="spacing" stroke="#fdf3f4" stroke-width="0.22">Checklist Umum</text>
<text x="57.50" y="253.70" font-size="9.7" fill="#fdf3f4" textLength="90.50" lengthAdjust="spacing" stroke="#fdf3f4" stroke-width="0.22">Rundown Pernikahan</text>
<text x="57.50" y="301.39" font-size="9.7" fill="#fdf3f4" textLength="115.50" lengthAdjust="spacing" stroke="#fdf3f4" stroke-width="0.22">Bridesmaid &amp; Groomsmaid</text>
<text x="57.50" y="335.00" font-size="9.7" fill="#fdf3f4" textLength="25.80" lengthAdjust="spacing" stroke="#fdf3f4" stroke-width="0.22">Venue</text>
<text x="57.50" y="349.00" font-size="9.7" fill="#fdf3f4" textLength="37.20" lengthAdjust="spacing" stroke="#fdf3f4" stroke-width="0.22">Dekorasi</text>
<text x="57.50" y="363.89" font-size="9.7" fill="#fdf3f4" textLength="37.50" lengthAdjust="spacing" stroke="#fdf3f4" stroke-width="0.22">Catering</text>
<text x="57.50" y="378.30" font-size="9.7" fill="#fdf3f4" textLength="46.80" lengthAdjust="spacing" stroke="#fdf3f4" stroke-width="0.22">MUA / Rias</text>
<text x="57.50" y="392.89" font-size="9.7" fill="#fdf3f4" textLength="101.10" lengthAdjust="spacing" stroke="#fdf3f4" stroke-width="0.22">Fotografer/Videografer</text>
<text x="57.50" y="407.30" font-size="9.7" fill="#fdf3f4" textLength="14.50" lengthAdjust="spacing" stroke="#fdf3f4" stroke-width="0.22">WO</text>
<text x="57.50" y="440.69" font-size="9.7" fill="#fdf3f4" textLength="110.50" lengthAdjust="spacing" stroke="#fdf3f4" stroke-width="0.22">Administrasi &amp; Seserahan</text>
<text x="57.50" y="455.30" font-size="9.7" fill="#fdf3f4" textLength="70.30" lengthAdjust="spacing" stroke="#fdf3f4" stroke-width="0.22">Catatan Penting</text>
<text x="57.50" y="488.69" font-size="9.7" fill="#fdf3f4" textLength="126.80" lengthAdjust="spacing" stroke="#fdf3f4" stroke-width="0.22">Rancangan Biaya Pernikahan</text>
<text x="57.60" y="286.93" font-size="9.5" fill="#1f1f1f" textLength="46.40" lengthAdjust="spacing" stroke="#1f1f1f" stroke-width="0.35">Undangan</text>
<g transform="translate(50.5,138.0)"><path d="M-4.5 0 L0 -4.2 L4.5 0 Z" fill="#d9653b"/><rect x="-3.6" y="-0.4" width="7.2" height="4.4" fill="#e8d9a8"/><rect x="-0.8" y="1" width="2" height="3" fill="#5a7f8f"/><rect x="-4.5" y="3.4" width="9" height="1" fill="#8fb56a"/></g>
<g transform="translate(48.7,173.3)"><circle cx="0" cy="-1" r="3" fill="#fbd45a"/><rect x="-1.2" y="1.6" width="2.4" height="2.4" fill="#d9c9a8"/></g>
<g transform="translate(48.9,188.0)"><rect x="-3.8" y="-2.6" width="7.6" height="6.6" fill="#f2b632"/><rect x="-1" y="-3.6" width="2" height="7.6" fill="#e0452f"/><rect x="-3.8" y="-2.8" width="7.6" height="1.6" fill="#e8702f"/></g>
<g transform="translate(48.9,202.2)"><rect x="-3.8" y="-3.6" width="7.6" height="7.4" fill="#dfe6ee"/><rect x="-3" y="-1" width="1.8" height="4.4" fill="#58a55c"/><rect x="-0.9" y="-2.8" width="1.8" height="6.2" fill="#d9534f"/><rect x="1.2" y="-1.8" width="1.8" height="5.2" fill="#4a7fd0"/></g>
<g transform="translate(48.9,236.0)"><rect x="-3.2" y="-3.8" width="6.2" height="7.6" fill="#ece7ea"/><path d="M0 3.8 L3.6 -0.6 L4.6 0.4 L1 4.4 Z" fill="#e8792f"/></g>
<g transform="translate(48.9,250.5)"><rect x="-3.2" y="-3.6" width="6.4" height="7.4" rx="0.8" fill="#c9875a"/><rect x="-2.3" y="-2.4" width="4.6" height="5.6" fill="#f3eef0"/><rect x="-1.4" y="-4.2" width="2.8" height="1.6" fill="#9aa3ad"/></g>
<g transform="translate(48.9,283.8)"><rect x="-3.8" y="-1.8" width="4.4" height="4.6" rx="1.2" fill="#4a6fd0"/><rect x="0.4" y="-3" width="2.6" height="6.2" rx="0.8" fill="#8ea6e6"/><circle cx="-1.6" cy="0.4" r="0.9" fill="#e4eaf9"/><rect x="3" y="-3.2" width="0.9" height="3" fill="#5a74c8"/></g>
<g transform="translate(48.9,298.2)"><circle cx="-1.8" cy="-2.8" r="1.2" fill="#e7b98a"/><circle cx="1.8" cy="-2.8" r="1.2" fill="#e7b98a"/><rect x="-3" y="-1.6" width="2.4" height="5.6" fill="#6c5a8e"/><rect x="0.6" y="-1.6" width="2.4" height="5.6" fill="#9b5d7c"/></g>
<g transform="translate(48.9,331.8)"><rect x="-3.4" y="-3.8" width="6.8" height="7.8" fill="#c9d4e3"/><rect x="-2.2" y="-3" width="4" height="6.4" fill="#5b86c9"/></g>
<g transform="translate(48.9,345.8)"><circle cx="0" cy="0" r="3.8" fill="#f4799b"/><circle cx="0" cy="0" r="1.3" fill="#f9c4d2"/></g>
<g transform="translate(48.9,360.7)"><circle cx="0" cy="0" r="3.9" fill="#d9d7ee"/><circle cx="0" cy="0" r="2.2" fill="#efeefa"/></g>
<g transform="translate(48.9,375.1)"><rect x="-1.3" y="-4" width="2.6" height="3.6" fill="#e0344f"/><rect x="-2" y="-0.6" width="4" height="2.4" fill="#e7c65a"/><rect x="-2.6" y="1.6" width="5.2" height="2.4" fill="#3b2b33"/></g>
<g transform="translate(48.9,390.1)"><rect x="-4" y="-2.2" width="8" height="5" fill="#4a4f58"/><rect x="-3" y="-0.4" width="6" height="2" fill="#c9ccd2"/></g>
<g transform="translate(48.9,404.1)"><ellipse cx="0" cy="0.2" rx="4" ry="3.2" fill="#f5c146"/><ellipse cx="0" cy="1.4" rx="2.4" ry="1.4" fill="#e3a52e"/></g>
<g transform="translate(48.9,437.5)"><rect x="-3" y="-3.8" width="6" height="7.6" fill="#dcd6dd"/><rect x="-3.6" y="2.6" width="6" height="1.4" fill="#c2bbc6"/></g>
<g transform="translate(48.9,452.1) rotate(-40)"><rect x="-4" y="-1.8" width="8" height="3.6" rx="0.8" fill="#e23b4a"/></g>
<g transform="translate(48.9,485.5)"><rect x="-3.8" y="-3.6" width="7.6" height="7.2" fill="#e6ecf5"/><path d="M-3 2 L-1 -0.4 L0.6 0.8 L3 -2.4" stroke="#5b86d9" stroke-width="1.1" fill="none"/></g>
<text x="210.40" y="121.16" font-size="17.6" fill="#ffffff" font-weight="bold" font-style="italic" textLength="147.30" lengthAdjust="spacing" font-family='"Liberation Serif", serif' stroke="#ffffff" stroke-width="0.45">~ Wedding Guest List ~</text>
<path d="M29 127.6 H184.5 V103" fill="none" stroke="#5560b8" stroke-width="1.1"/><path d="M29 127.6 V103.2 H184.5" fill="none" stroke="#7d86d8" stroke-width="0.8" opacity="0.6"/>
<circle cx="184.6" cy="128.2" r="3.1" fill="#2f5fd6" stroke="#ffffff" stroke-width="0.7"/>
<text x="311.00" y="161.41" font-size="12.6" fill="#ffffff" textLength="65.00" lengthAdjust="spacing" stroke="#ffffff" stroke-width="0.3">Total Tamu</text>
<rect x="220.20" y="169.30" width="244.60" height="103.90" fill="#ffffff" stroke="#b9bdbb" stroke-width="0.8"/>
<line x1="242.00" y1="256.30" x2="459.00" y2="256.30" stroke="#8a8a8a" stroke-width="1" />
<text x="236.00" y="259.17" font-size="8.2" fill="#222" text-anchor="middle">0</text>
<line x1="242.00" y1="236.95" x2="459.00" y2="236.95" stroke="#d9d9d9" stroke-width="0.8" />
<text x="236.00" y="239.82" font-size="8.2" fill="#222" text-anchor="middle">1</text>
<line x1="242.00" y1="217.60" x2="459.00" y2="217.60" stroke="#d9d9d9" stroke-width="0.8" />
<text x="236.00" y="220.47" font-size="8.2" fill="#222" text-anchor="middle">2</text>
<line x1="242.00" y1="198.25" x2="459.00" y2="198.25" stroke="#d9d9d9" stroke-width="0.8" />
<text x="236.00" y="201.12" font-size="8.2" fill="#222" text-anchor="middle">3</text>
<line x1="242.00" y1="178.90" x2="459.00" y2="178.90" stroke="#d9d9d9" stroke-width="0.8" />
<text x="236.00" y="181.77" font-size="8.2" fill="#222" text-anchor="middle">4</text>
<rect x="274.20" y="178.90" width="59.80" height="77.40" fill="#5382ea" rx="0.8"/>
<rect x="367.40" y="217.70" width="59.20" height="38.60" fill="#5382ea" rx="0.8"/>
<line x1="242.00" y1="256.40" x2="459.00" y2="256.40" stroke="#6f6f6f" stroke-width="1" />
<text x="304.60" y="267.09" font-size="7.7" fill="#222" text-anchor="middle">Diundang</text>
<text x="396.80" y="267.09" font-size="7.7" fill="#222" text-anchor="middle">Hadir</text>
<text x="219.50" y="287.21" font-size="10.6" fill="#1f1f1f" textLength="46.70" lengthAdjust="spacing">Diundang</text>
<text x="219.50" y="301.61" font-size="10.6" fill="#1f1f1f" textLength="26.50" lengthAdjust="spacing">Hadir</text>
<text x="219.50" y="318.41" font-size="10.6" fill="#1f1f1f" textLength="123.40" lengthAdjust="spacing">Undangan Belum Terkirim</text>
<text x="437.20" y="287.14" font-size="10.4" fill="#1f1f1f" text-anchor="middle">4</text>
<text x="437.20" y="301.54" font-size="10.4" fill="#1f1f1f" text-anchor="middle">2</text>
<text x="437.20" y="318.34" font-size="10.4" fill="#1f1f1f" text-anchor="middle">2</text>
<text x="592.30" y="159.98" font-size="10.8" fill="#ffffff" textLength="133.60" lengthAdjust="spacing">GRAFIK KEHADIRAN TAMU</text>
<rect x="534.40" y="169.30" width="243.80" height="149.50" fill="#ffffff" stroke="#b9bdbb" stroke-width="0.8"/>
<rect x="567.40" y="177.20" width="7.00" height="7.00" fill="#4a86e8" />
<text x="579.80" y="183.46" font-size="7.6" fill="#222" textLength="23.20" lengthAdjust="spacing">HADIR</text>
<rect x="615.40" y="177.20" width="7.00" height="7.00" fill="#dc4b3e" />
<text x="627.70" y="183.46" font-size="7.6" fill="#222" textLength="45.30" lengthAdjust="spacing">RAGU-RAGU</text>
<rect x="685.60" y="177.20" width="7.00" height="7.00" fill="#f3bb3b" />
<text x="698.60" y="183.46" font-size="7.6" fill="#222" textLength="47.40" lengthAdjust="spacing">TIDAK HADIR</text>
<line x1="558.40" y1="277.20" x2="771.40" y2="277.20" stroke="#d9d9d9" stroke-width="0.8" />
<text x="554.60" y="280.00" font-size="8" fill="#222" text-anchor="end">0,0</text>
<line x1="558.40" y1="256.15" x2="771.40" y2="256.15" stroke="#d9d9d9" stroke-width="0.8" />
<text x="554.60" y="258.95" font-size="8" fill="#222" text-anchor="end">0,5</text>
<line x1="558.40" y1="235.10" x2="771.40" y2="235.10" stroke="#d9d9d9" stroke-width="0.8" />
<text x="554.60" y="237.90" font-size="8" fill="#222" text-anchor="end">1,0</text>
<line x1="558.40" y1="214.05" x2="771.40" y2="214.05" stroke="#d9d9d9" stroke-width="0.8" />
<text x="554.60" y="216.85" font-size="8" fill="#222" text-anchor="end">1,5</text>
<line x1="558.40" y1="193.00" x2="771.40" y2="193.00" stroke="#d9d9d9" stroke-width="0.8" />
<text x="554.60" y="195.80" font-size="8" fill="#222" text-anchor="end">2,0</text>
<rect x="612.10" y="193.00" width="7.40" height="84.20" fill="#5383ea" rx="0.8"/>
<line x1="558.40" y1="277.30" x2="771.40" y2="277.30" stroke="#6f6f6f" stroke-width="1" />
<text transform="translate(588.8,286.8) rotate(-45)" text-anchor="end" font-size="7.7" fill="#222">Lamaran</text>
<text transform="translate(628.5,286.8) rotate(-45)" text-anchor="end" font-size="7.7" fill="#222">Akad</text>
<text transform="translate(671.5,286.8) rotate(-45)" text-anchor="end" font-size="7.7" fill="#222">Resepsi</text>
<text transform="translate(708.5,286.8) rotate(-45)" text-anchor="end" font-size="7.7" fill="#222">Honeym...</text>
<text transform="translate(748.5,286.8) rotate(-45)" text-anchor="end" font-size="7.7" fill="#222">Melahirkan</text>
<text x="898.40" y="176.08" font-size="8.8" fill="#ffffff" text-anchor="middle">ACARA</text>
<text x="878.30" y="191.50" font-size="9.7" fill="#222222" textLength="39.80" lengthAdjust="spacing">Lamaran</text>
<text x="887.20" y="206.05" font-size="9.7" fill="#222222" textLength="22.00" lengthAdjust="spacing">Akad</text>
<text x="880.70" y="222.65" font-size="9.7" fill="#222222" textLength="35.00" lengthAdjust="spacing">Resepsi</text>
<text x="871.90" y="239.35" font-size="9.7" fill="#222222" textLength="52.60" lengthAdjust="spacing">Honeymoon</text>
<text x="874.20" y="254.00" font-size="9.7" fill="#222222" textLength="48.00" lengthAdjust="spacing">Melahirkan</text>
<text x="244.10" y="357.08" font-size="10.8" fill="#ffffff" textLength="74.10" lengthAdjust="spacing" stroke="#ffffff" stroke-width="0.4">Kategori Tamu</text>
<text x="355.90" y="351.38" font-size="10.8" fill="#ffffff" textLength="38.00" lengthAdjust="spacing" stroke="#ffffff" stroke-width="0.4">Jumlah</text>
<text x="348.90" y="363.38" font-size="10.8" fill="#ffffff" textLength="51.50" lengthAdjust="spacing" stroke="#ffffff" stroke-width="0.4">Diundang</text>
<text x="418.50" y="351.38" font-size="10.8" fill="#ffffff" textLength="38.00" lengthAdjust="spacing" stroke="#ffffff" stroke-width="0.4">Jumlah</text>
<text x="422.90" y="363.38" font-size="10.8" fill="#ffffff" textLength="28.20" lengthAdjust="spacing" stroke="#ffffff" stroke-width="0.4">Hadir</text>
<text x="261.70" y="378.56" font-size="9.6" fill="#222222" textLength="38.80" lengthAdjust="spacing">Keluarga</text>
<text x="252.20" y="392.86" font-size="9.6" fill="#222222" textLength="57.10" lengthAdjust="spacing">Teman Kuliah</text>
<text x="374.50" y="378.56" font-size="9.6" fill="#222222" text-anchor="middle">3</text>
<text x="374.50" y="392.86" font-size="9.6" fill="#222222" text-anchor="middle">1</text>
<text x="437.50" y="378.56" font-size="9.6" fill="#222222" text-anchor="middle">1</text>
<text x="437.50" y="392.86" font-size="9.6" fill="#222222" text-anchor="middle">1</text>
<text x="558.50" y="356.78" font-size="10.8" fill="#ffffff" textLength="74.70" lengthAdjust="spacing" stroke="#ffffff" stroke-width="0.4">Kategori Tamu</text>
<text x="682.00" y="356.78" font-size="10.8" fill="#ffffff" textLength="78.20" lengthAdjust="spacing" stroke="#ffffff" stroke-width="0.4">Kategori Acara</text>
<text x="835.40" y="356.78" font-size="10.8" fill="#ffffff" textLength="62.30" lengthAdjust="spacing" stroke="#ffffff" stroke-width="0.4">Nama Tamu</text>
<text x="570.40" y="378.76" font-size="9.6" fill="#222222" textLength="38.40" lengthAdjust="spacing">Keluarga</text>
<text x="703.80" y="378.76" font-size="9.6" fill="#222222" textLength="22.00" lengthAdjust="spacing">Akad</text>
<text x="858.10" y="378.76" font-size="9.6" fill="#222222" textLength="17.00" lengthAdjust="spacing">JHJ</text>
<text x="560.85" y="393.26" font-size="9.6" fill="#222222" textLength="57.50" lengthAdjust="spacing">Teman Kuliah</text>
<text x="703.80" y="393.26" font-size="9.6" fill="#222222" textLength="22.00" lengthAdjust="spacing">Akad</text>
<text x="847.60" y="393.26" font-size="9.6" fill="#222222" textLength="38.00" lengthAdjust="spacing">GHJGJH</text>
<text x="570.40" y="407.66" font-size="9.6" fill="#222222" textLength="38.40" lengthAdjust="spacing">Keluarga</text>
<text x="688.45" y="407.66" font-size="9.6" fill="#222222" textLength="52.70" lengthAdjust="spacing">Honeymoon</text>
<text x="849.10" y="407.66" font-size="9.6" fill="#222222" textLength="35.00" lengthAdjust="spacing">HKJHKJ</text>
<text x="570.40" y="424.41" font-size="9.6" fill="#222222" textLength="38.40" lengthAdjust="spacing">Keluarga</text>
<text x="695.15" y="424.41" font-size="9.6" fill="#222222" textLength="39.30" lengthAdjust="spacing">Lamaran</text>
<text x="850.85" y="424.41" font-size="9.6" fill="#222222" textLength="31.50" lengthAdjust="spacing">GGGHJ</text>
<path d="M649.0 374.0 L653.8 374.0 L651.4 376.6 Z" fill="#b0643c"/>
<path d="M774.8 374.0 L779.6 374.0 L777.2 376.6 Z" fill="#b0643c"/>
<path d="M649.0 388.5 L653.8 388.5 L651.4 391.1 Z" fill="#b0643c"/>
<path d="M774.8 388.5 L779.6 388.5 L777.2 391.1 Z" fill="#b0643c"/>
<path d="M649.0 402.9 L653.8 402.9 L651.4 405.5 Z" fill="#b0643c"/>
<path d="M774.8 402.9 L779.6 402.9 L777.2 405.5 Z" fill="#b0643c"/>
<path d="M649.0 419.6 L653.8 419.6 L651.4 422.2 Z" fill="#b0643c"/>
<path d="M774.8 419.6 L779.6 419.6 L777.2 422.2 Z" fill="#b0643c"/>
<path d="M649.0 436.4 L653.8 436.4 L651.4 439.0 Z" fill="#b0643c"/>
<path d="M774.8 436.4 L779.6 436.4 L777.2 439.0 Z" fill="#b0643c"/>
<path d="M649.0 450.9 L653.8 450.9 L651.4 453.6 Z" fill="#b0643c"/>
<path d="M774.8 450.9 L779.6 450.9 L777.2 453.6 Z" fill="#b0643c"/>
<path d="M649.0 467.8 L653.8 467.8 L651.4 470.4 Z" fill="#b0643c"/>
<path d="M774.8 467.8 L779.6 467.8 L777.2 470.4 Z" fill="#b0643c"/>
<path d="M649.0 484.0 L653.8 484.0 L651.4 486.6 Z" fill="#b0643c"/>
<path d="M774.8 484.0 L779.6 484.0 L777.2 486.6 Z" fill="#b0643c"/>
<path d="M649.0 497.5 L653.8 497.5 L651.4 500.1 Z" fill="#b0643c"/>
<path d="M774.8 497.5 L779.6 497.5 L777.2 500.1 Z" fill="#b0643c"/>
<rect x="953.40" y="88.00" width="6.60" height="420.20" fill="#ffffff" />
<rect x="953.40" y="88.60" width="6.60" height="13.70" fill="#f8f9fa" />
<line x1="953.40" y1="88.00" x2="953.40" y2="508.20" stroke="#e4e6e8" stroke-width="0.8" />
<rect x="954.3" y="104" width="10" height="16.2" rx="3" fill="#dadce0"/>
<rect x="953.40" y="488.60" width="6.60" height="19.60" fill="#f8f9fa" />
<line x1="953.40" y1="498.30" x2="960.00" y2="498.30" stroke="#d7dbe8" stroke-width="0.7" />
<path d="M955.2 493.9 h3 l-1.5 -1.6z M955.2 502.6 h3 l-1.5 1.6z" fill="#5f6368"/>
<rect x="0.00" y="508.20" width="960.00" height="8.30" fill="#ffffff" />
<rect x="0.00" y="505.40" width="29.00" height="11.10" fill="#f8f9fa" />
<line x1="0.00" y1="516.30" x2="960.00" y2="516.30" stroke="#eceff3" stroke-width="0.8" />
<rect x="29.6" y="509.8" width="479.6" height="5.2" rx="2.6" fill="#dadce0"/>
<rect x="934.40" y="508.20" width="19.00" height="8.10" fill="#f8f9fa" />
<rect x="953.40" y="508.20" width="6.60" height="8.10" fill="#f1f3f4" />
<line x1="943.90" y1="508.20" x2="943.90" y2="516.30" stroke="#ffffff" stroke-width="0.8" />
<path d="M940.0 510.8 v3 l-1.6 -1.5z M948.4 510.8 v3 l1.6 -1.5z" fill="#5f6368"/>
<g><rect x="6.9" y="428.3" width="28.8" height="27" rx="5.5" fill="#4a8fe8" fill-opacity="0.58" stroke="#e4ecf8" stroke-opacity="0.85" stroke-width="0.9"/><path d="M27.4 433.4 L22.6 442.2 Q20.6 445.6 17 444.8 Q13.4 443.4 16 440.8 Z" fill="#ffffff" fill-opacity="0.94"/><path d="M15.4 452 L20.6 443.4 Q22.8 440 26.4 441 Q29.8 442.6 27.2 445 Z" fill="#ffffff" fill-opacity="0.6"/></g>
</svg></div>
<div class="sec" id="tabs"><svg width="960" height="23" viewBox="0 516 960 23">
<rect x="0" y="516.4" width="960" height="23" fill="#f9fbfd"/>
<rect x="323.2" y="516.4" width="86.7" height="23" fill="#e1e9f7"/>
<path d="M35 528.3 h7 M38.5 524.8 v7" stroke="#444746" stroke-width="1.2"/>
<path d="M58.6 525.6 h8.8 M58.6 528.3 h8.8 M58.6 531 h8.8" stroke="#444746" stroke-width="1.1"/>
<line x1="77.8" y1="521" x2="77.8" y2="536" stroke="#c7c7c7" stroke-width="0.9"/>
<g transform="translate(92.5,528.4)"><rect x="-3.2" y="-3.8" width="6" height="7.6" fill="#d9d3da"/><path d="M-0.4 3.8 L3.2 -0.6 L4.4 0.4 L0.8 4.4 Z" fill="#e8792f"/></g>
<text x="101.00" y="531.73" font-size="9.5" fill="#444746" textLength="70.00" lengthAdjust="spacing" stroke="#444746" stroke-width="0.4">Checklist Umum</text>
<path d="M178.50 527.50 h5.00 L181.00 530.06 Z" fill="#444746"/>
<g transform="translate(204.5,528.4)"><rect x="-3.2" y="-3.6" width="6.4" height="7.4" rx="0.8" fill="#c9a083"/><rect x="-2.3" y="-2.4" width="4.6" height="5.6" fill="#f3eef0"/><rect x="-1.4" y="-4.2" width="2.8" height="1.6" fill="#9aa3ad"/></g>
<text x="213.00" y="531.73" font-size="9.5" fill="#444746" textLength="91.00" lengthAdjust="spacing" stroke="#444746" stroke-width="0.4">Rundown Pernikahan</text>
<path d="M310.50 527.50 h5.00 L313.00 530.06 Z" fill="#444746"/>
<g transform="translate(336.5,528.4)"><rect x="-3.6" y="-2.4" width="4.6" height="5.4" fill="#3f63c9"/><rect x="1" y="-3.4" width="2.4" height="6.6" fill="#6e8fe0"/><circle cx="-1.4" cy="0.2" r="1" fill="#d9e2f7"/></g>
<text x="345.70" y="531.73" font-size="9.5" fill="#1b55c9" textLength="45.00" lengthAdjust="spacing" stroke="#1b55c9" stroke-width="0.4">Undangan</text>
<path d="M398.00 527.50 h5.00 L400.50 530.06 Z" fill="#1b55c9"/>
<g transform="translate(423,528.4)"><circle cx="-1.8" cy="-2.8" r="1.2" fill="#d9a070"/><circle cx="1.8" cy="-2.8" r="1.2" fill="#d9a070"/><rect x="-3" y="-1.6" width="2.4" height="5.6" fill="#5a4a7e"/><rect x="0.6" y="-1.6" width="2.4" height="5.6" fill="#8b4d6c"/></g>
<text x="432.40" y="531.73" font-size="9.5" fill="#444746" textLength="114.30" lengthAdjust="spacing" stroke="#444746" stroke-width="0.4">Bridesmaid &amp; Groomsmaid</text>
<path d="M553.60 527.50 h5.00 L556.10 530.06 Z" fill="#444746"/>
<g transform="translate(579.4,528.4)"><rect x="-3.4" y="-3.8" width="6.8" height="7.8" fill="#b9c4d3"/><rect x="-2.2" y="-3" width="4" height="6.4" fill="#4b76b9"/></g>
<text x="588.70" y="531.73" font-size="9.5" fill="#444746" textLength="26.30" lengthAdjust="spacing" stroke="#444746" stroke-width="0.4">Venue</text>
<path d="M621.90 527.50 h5.00 L624.40 530.06 Z" fill="#444746"/>
<g transform="translate(648,528.4)"><circle cx="0" cy="0" r="3.8" fill="#ee5f86"/><circle cx="0" cy="0" r="1.3" fill="#f9c4d2"/></g>
<text x="657.00" y="531.73" font-size="9.5" fill="#444746" textLength="37.50" lengthAdjust="spacing" stroke="#444746" stroke-width="0.4">Dekorasi</text>
<path d="M701.40 527.50 h5.00 L703.90 530.06 Z" fill="#444746"/>
<g transform="translate(727.5,528.4)"><rect x="-3" y="-3.8" width="6" height="7.6" fill="#cfc9d2"/><rect x="-3.6" y="2.6" width="6" height="1.4" fill="#b2abb6"/></g>
<text x="736.50" y="531.73" font-size="9.5" fill="#444746" textLength="77.20" lengthAdjust="spacing" stroke="#444746" stroke-width="0.4">Administrasi &amp; Se:</text>
<path d="M831.2 525 l-3 3.3 3 3.3" fill="none" stroke="#444746" stroke-width="1.2"/>
<path d="M852.4 525 l3 3.3 -3 3.3" fill="none" stroke="#c4c7c5" stroke-width="1.2"/>
<path d="M945 526.2 l-3.2 3.5 3.2 3.5" fill="none" stroke="#444746" stroke-width="1.3"/>
</svg></div>
</body>
</html>
